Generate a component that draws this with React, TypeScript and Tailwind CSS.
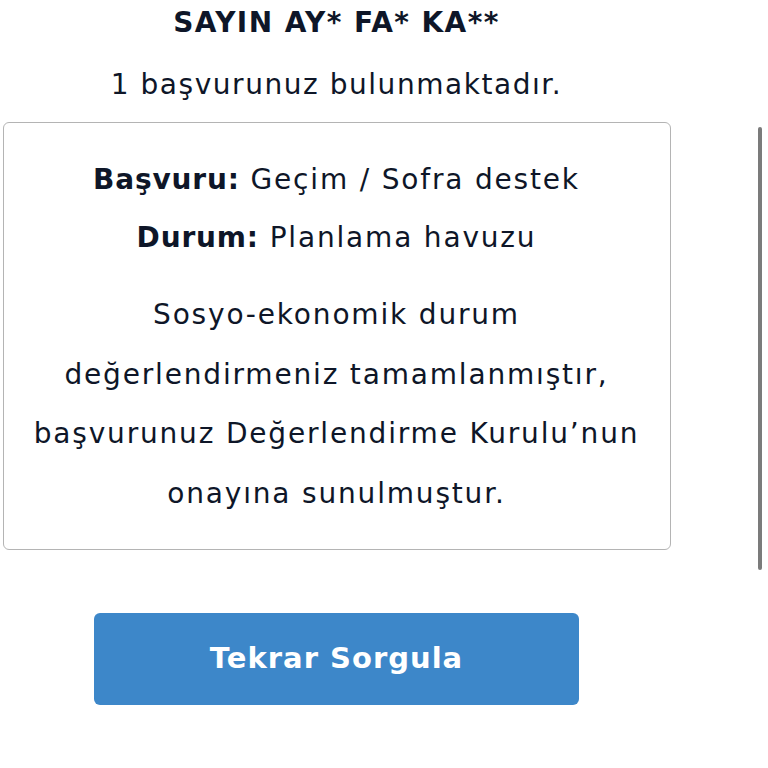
import React from "react";

const font = { fontFamily: '"DejaVu Sans", "Noto Sans", sans-serif' };

const App: React.FC = () => {
    return (
        <div className="relative min-h-[768px] w-[768px] bg-white text-[#0e1628]" style={font}>
            <div className="flex w-[673px] flex-col items-center">
                <h1 className="mt-px text-[28px] font-bold leading-[44px] tracking-[0.05em]">SAYIN AY* FA* KA**</h1>
                <p className="mt-[18px] text-[28px] leading-[44px] tracking-[0.055em]">1 başvurunuz bulunmaktadır.</p>

                <div className="mt-[15px] flex w-[668px] flex-col items-center rounded-md border border-[#b4b4b4] px-1 pb-[26px] pt-[28px] text-center text-[28px] tracking-[0.065em]">
                    <p className="leading-[58px]">
                        <span className="font-bold tracking-[0.03em]">Başvuru:</span> Geçim / Sofra destek
                    </p>
                    <p className="leading-[58px]">
                        <span className="font-bold tracking-[0.03em]">Durum:</span> Planlama havuzu
                    </p>
                    <p className="mt-[18px] leading-[59.5px]">
                        Sosyo-ekonomik durum
                        <br />
                        değerlendirmeniz tamamlanmıştır,
                        <br />
                        başvurunuz Değerlendirme Kurulu’nun
                        <br />
                        onayına sunulmuştur.
                    </p>
                </div>

                <button
                    type="button"
                    className="mt-[63px] h-[92px] w-[485px] rounded-md bg-[#3d87c9] text-[29px] font-bold tracking-[0.035em] text-white"
                >
                    Tekrar Sorgula
                </button>
            </div>

            {/* overlay scroll indicator */}
            <div className="pointer-events-none absolute left-[758px] top-[127px] h-[443px] w-[4px] rounded-full bg-[#7b7b7b]" aria-hidden />
        </div>
    );
};

export default App;
